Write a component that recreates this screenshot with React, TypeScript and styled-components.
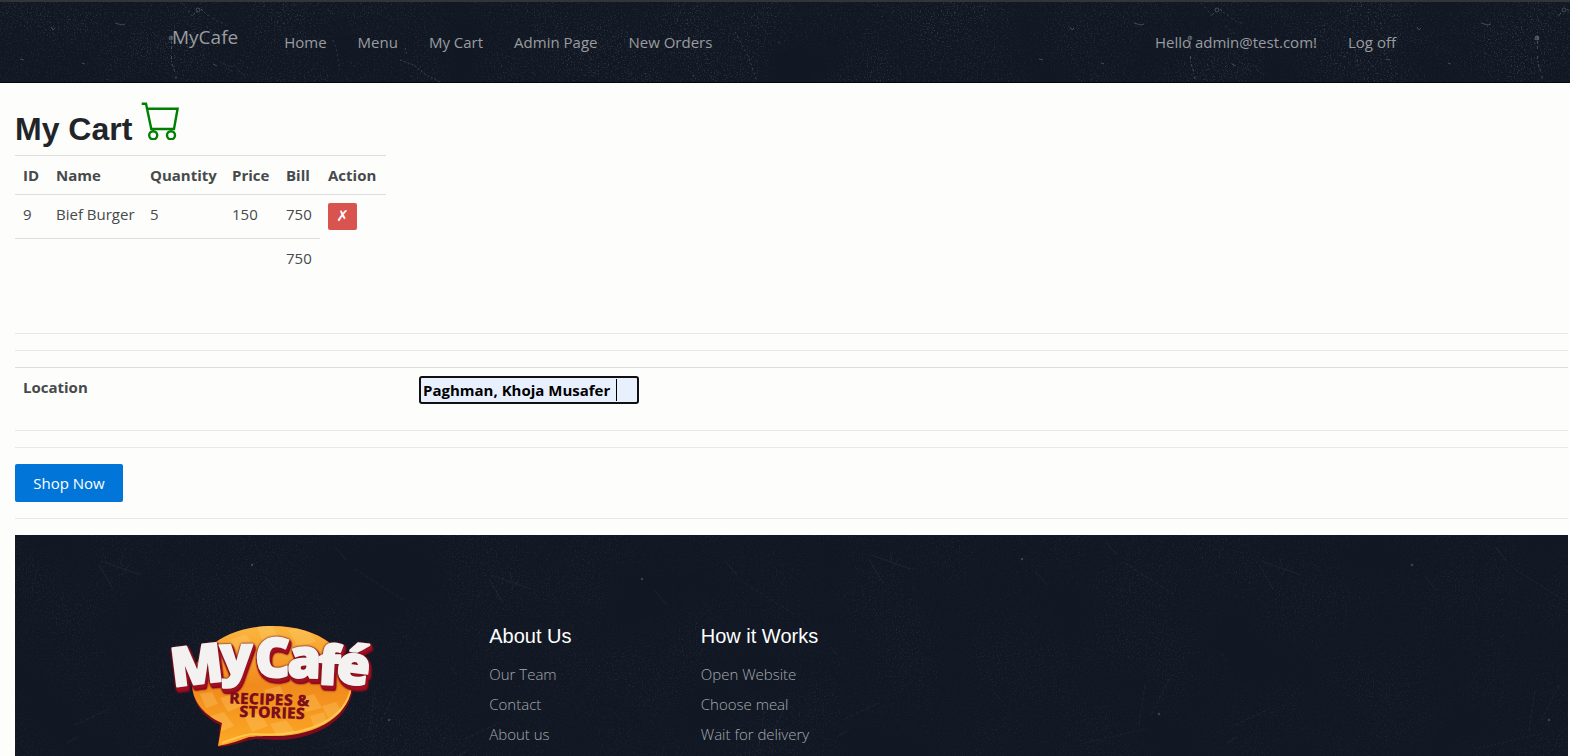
import React from "react";
import styled, { createGlobalStyle } from "styled-components";

const Global = createGlobalStyle`
  *, *::before, *::after { box-sizing: border-box; }
  body {
    margin: 0;
    background: #fdfdfb;
    color: #464a4c;
    font: 400 15px/22px "Open Sans", "Noto Sans", sans-serif;
  }
`;

const Page = styled.div`
  display: flex;
  flex-direction: column;
  min-height: 100vh;
`;

const Header = styled.header`
  position: relative;
  background: #111824;
  border-top: 2px solid #333435;
  border-bottom: 1px solid #06080c;
`;

const TextureLayer = styled.svg`
  position: absolute;
  inset: 0;
  width: 100%;
  height: 100%;
`;

const GrainFill = styled.rect<{ $strength: number }>`
  opacity: ${(p) => p.$strength};
`;

const Nav = styled.nav`
  position: relative;
  display: flex;
  align-items: center;
  width: 80%;
  height: 80px;
  margin: 0 auto;
  padding: 0 17px 0 15px;
`;

const Brand = styled.a`
  margin-right: 46px;
  padding-bottom: 10px;
  color: #9a9c9f;
  font-size: 19px;
  text-decoration: none;
`;

const NavList = styled.ul<{ $end?: boolean }>`
  display: flex;
  gap: 31px;
  margin: 0;
  margin-left: ${(p) => (p.$end ? "auto" : "0")};
  padding: 0;
  list-style: none;
`;

const NavLink = styled.a`
  color: #9a9c9f;
  text-decoration: none;
`;

const Main = styled.main`
  display: flex;
  flex: 1;
  flex-direction: column;
  padding: 17px 2px 0 15px;
`;

const Title = styled.h1`
  margin: 0 0 8px;
  color: #212529;
  font: 700 32px/35px "Liberation Sans", Arial, sans-serif;
`;

const CartIcon = styled.svg`
  width: 39px;
  height: 40px;
  vertical-align: baseline;
`;

const CartTable = styled.table`
  width: 371px;
  margin-bottom: 56px;
  border-collapse: separate;
  border-spacing: 0;
  table-layout: fixed;
  text-align: left;

  th,
  td {
    padding: 8px 0 8px 8px;
    border-top: 1px solid #dddddb;
    vertical-align: top;
    white-space: nowrap;
  }
`;

const Column = styled.col<{ $width: number }>`
  width: ${(p) => p.$width}px;
`;

const RemoveButton = styled.button`
  display: block;
  width: 29px;
  height: 27px;
  padding: 0;
  border: 0;
  border-radius: 2px;
  background: #d9534f;
  color: #fff;
  font: 700 15px/27px "DejaVu Sans", sans-serif;
`;

const Rule = styled.hr`
  width: 100%;
  height: 1px;
  margin: 0 0 16px;
  border: 0;
  background: #e8e8e7;
`;

const Form = styled.form`
  display: flex;
  flex-direction: column;
  align-items: flex-start;
`;

const LocationTable = styled.table`
  width: 100%;
  margin-bottom: 16px;
  border-spacing: 0;
  text-align: left;

  th {
    height: 47px;
    padding: 8px 8px 2px;
    border-top: 1px solid #dddddb;
    vertical-align: top;
  }
`;

const Field = styled.div`
  position: relative;
  width: 220px;
`;

const LocationInput = styled.input`
  display: block;
  width: 100%;
  height: 28px;
  padding: 0 2px;
  border: 2px solid #101014;
  border-radius: 3px;
  outline: 0;
  background: #e8f0fe;
  color: #000;
  font: inherit;
`;

const Caret = styled.span`
  position: absolute;
  top: 3px;
  right: 22px;
  width: 1px;
  height: 22px;
  background: #000;
`;

const ShopButton = styled.button`
  min-width: 108px;
  height: 38px;
  margin-bottom: 16px;
  padding: 0 16px;
  border: 0;
  border-radius: 2px;
  background: #0275d8;
  color: #fff;
  font: inherit;
`;

const Footer = styled.footer`
  position: relative;
  flex: 1;
  padding: 90px 142px 8px;
  background: #111824;
`;

const FooterGrid = styled.div`
  position: relative;
  display: grid;
  grid-template-columns: 3fr 2fr 7fr;
`;

const FooterColumn = styled.section`
  padding: 0 15px;
`;

const Logo = styled.svg`
  display: block;
  width: 200px;
  height: 122px;
  overflow: visible;
`;

const LogoName = styled.text`
  fill: #f4f2f1;
  stroke: #f4f2f1;
  stroke-width: 2px;
  stroke-linejoin: round;
  font: 800 54px "Open Sans", sans-serif;
  filter: drop-shadow(0 0 1px #5d0712) drop-shadow(1px 1px 0 #b01424) drop-shadow(0 2px 0 #a50f20)
    drop-shadow(1px 2px 0 #8c0b1b);
`;

const LogoTag = styled.text`
  fill: #7d0f1c;
  font: 800 16px "Open Sans", sans-serif;
`;

const FooterTitle = styled.h2`
  margin: 0 0 16px;
  color: #fff;
  font: 400 20px/22px "Liberation Sans", Arial, sans-serif;
`;

const FooterList = styled.ul`
  display: flex;
  flex-direction: column;
  gap: 8px;
  margin: 0;
  padding: 0;
  list-style: none;
`;

const FooterLink = styled.a`
  color: #a6a9ae;
  font-weight: 300;
  text-decoration: none;
`;

const columns = [
  { name: "ID", width: 33 },
  { name: "Name", width: 94 },
  { name: "Quantity", width: 82 },
  { name: "Price", width: 54 },
  { name: "Bill", width: 42 },
  { name: "Action", width: 66 },
];

const footerColumns = [
  { title: "About Us", links: ["Our Team", "Contact", "About us"] },
  { title: "How it Works", links: ["Open Website", "Choose meal", "Wait for delivery"] },
];

function Grain({ id, seed, strength }: { id: string; seed: number; strength: number }) {
  return (
    <>
      <filter id={id} x="0" y="0" width="100%" height="100%">
        <feTurbulence type="fractalNoise" baseFrequency="0.7" numOctaves={3} seed={seed} result="fine" />
        <feColorMatrix in="fine" type="matrix" values="0 0 0 0 .4  0 0 0 0 .45  0 0 0 0 .48  3 0 0 0 -1.6" result="dots" />
        <feTurbulence type="fractalNoise" baseFrequency="0.012" numOctaves={2} seed={seed + 3} result="broad" />
        <feColorMatrix in="broad" type="matrix" values="0 0 0 0 1  0 0 0 0 1  0 0 0 0 1  2 0 0 0 -0.4" result="mask" />
        <feComposite in="dots" in2="mask" operator="in" />
      </filter>
      <GrainFill $strength={strength} width="100%" height="100%" filter={`url(#${id})`} />
    </>
  );
}

function HeaderTexture() {
  return (
    <TextureLayer aria-hidden="true">
      <Grain id="header-grain" seed={4} strength={0.25} />
      <defs>
        <g id="scuffs" fill="none" stroke="#7d858c" strokeOpacity=".45">
          <circle cx="198" cy="8" r="2" />
          <path d="M195 11l-2 2M201 7l2 2" />
          <circle cx="171" cy="36" r="2" fill="#7d858c" fillOpacity=".4" />
          <path d="M171.5 34v14M171.5 54v6M172 62l3 8M176 74v5" strokeDasharray="3 2" />
          <path d="M115 21l7 2 3-1M51 25l2 3 2-2M20 57l4 1M213 62l4 2M82 61l3 1" />
          <path d="M182 1l8 9 4 6M204 10l14 10 8 2M206 24l10 8" strokeOpacity=".3" strokeDasharray="2 3" />
          <path d="M220 60l10 5 5-2 4 6 6 4M226 66l8 4M240 58l5 3" strokeOpacity=".35" strokeDasharray="1 2" />
          <path d="M328 8l8 6M333 38l3 8 4 22M350 60l5 5" strokeOpacity=".3" strokeDasharray="2 3" />
        </g>
      </defs>
      <use href="#scuffs" />
      <use href="#scuffs" x="1019" />
      <use href="#scuffs" x="1366" />
      <g fill="none" stroke="#7d858c" strokeOpacity=".4">
        <path d="M735 30l14 26 8 24" strokeDasharray="2 3" />
        <path d="M400 58l14 5 12 10 16 8M405 46l2 7M778 40l3 2M693 73l3 4" strokeDasharray="2 2" />
      </g>
    </TextureLayer>
  );
}

function FooterTexture() {
  return (
    <TextureLayer aria-hidden="true">
      <Grain id="footer-grain" seed={9} strength={0.12} />
      <defs>
        <g id="scratches" fill="none" stroke="#8a929c" strokeOpacity=".1">
          <path d="M86 26l40 14M84 30l14 24M106 40l8-10M320 12l12 14M250 42l12 14" />
          <path d="M340 34l50 32M60 190l34-16M46 118l6 8M360 156l-6 40M384 150l-18 36" strokeDasharray="4 2" />
          <path d="M300 214l60-14M206 160l9 10M126 150l-12 14" strokeDasharray="2 2" />
          <circle cx="237" cy="30" r="1" fill="#8a929c" fillOpacity=".4" />
          <circle cx="374" cy="185" r="1" fill="#8a929c" fillOpacity=".4" />
          <path d="M52 208l10-6M105 24l2 8" />
        </g>
      </defs>
      <use href="#scratches" />
      <use href="#scratches" x="390" y="14" />
      <use href="#scratches" x="770" y="-6" />
      <use href="#scratches" x="1160" />
    </TextureLayer>
  );
}

function CafeLogo() {
  return (
    <Logo viewBox="12 15 200 122" role="img" aria-label="MyCafé Recipes & Stories">
      <defs>
        <linearGradient id="bubble" x1="0" y1="0" x2="0" y2="1">
          <stop offset="0" stopColor="#fbb840" />
          <stop offset=".5" stopColor="#f08a1c" />
          <stop offset="1" stopColor="#fdab25" />
        </linearGradient>
        <clipPath id="bubble-clip">
          <path d="M112 16C160 16 192 42 192 73C192 104 158 126 116 126C104 126 98 126 89 127C80 130 70 134 58 136L62 113C42 104 32 90 32 73C32 42 66 16 112 16Z" />
        </clipPath>
      </defs>
      <path
        fill="#7e0b1d"
        d="M114 16C162 16 194 44 193 77C191 108 158 130 116 130C104 130 98 128 89 130C80 133 70 136 58 137L60 115C42 106 32 92 32 73C32 42 66 16 114 16Z"
      />
      <g clipPath="url(#bubble-clip)">
        <rect x="30" y="14" width="166" height="124" fill="url(#bubble)" />
        <g fill="#ffd57a" fillOpacity=".28">
          <path d="M96 14l14-2 8 14-16 4zM128 20l18-4 10 16-18 4zM70 30l16-6 8 14-16 4zM60 88l14-4 8 12-14 6zM40 84l12-2 6 12-12 4zM84 106l16-3 8 13-16 6zM110 114l16-4 9 12-17 6zM50 106l14-4 10 14-14 6zM138 88l16-4 8 14-16 4zM162 96l14-4 6 10-14 6zM150 106l14-4 4 12-14 3zM104 80l16-4 4 8-16 4z" />
        </g>
        <path fill="none" stroke="#ffd05c" strokeOpacity=".8" strokeWidth="2" d="M62 133C76 128 84 124 94 124C150 128 186 108 191 78" />
      </g>
      <LogoName x="13 60 95 127 157 175" y="77 65 67 67 74 72" rotate="-7 -1 0 2 3 7">
        MyCafé
      </LogoName>
      <LogoTag x="69" y="95" transform="rotate(2 110 93)">RECIPES &amp;</LogoTag>
      <LogoTag x="79" y="108" transform="rotate(2 110 106)">STORIES</LogoTag>
    </Logo>
  );
}

export default function App() {
  return (
    <Page>
      <Global />
      <Header>
        <HeaderTexture />
        <Nav>
          <Brand href="#">MyCafe</Brand>
          <NavList>
            {["Home", "Menu", "My Cart", "Admin Page", "New Orders"].map((label) => (
              <li key={label}>
                <NavLink href="#">{label}</NavLink>
              </li>
            ))}
          </NavList>
          <NavList $end>
            {["Hello admin@test.com!", "Log off"].map((label) => (
              <li key={label}>
                <NavLink href="#">{label}</NavLink>
              </li>
            ))}
          </NavList>
        </Nav>
      </Header>
      <Main>
        <Title>
          My Cart{" "}
          <CartIcon viewBox="1 0 39 40" fill="none" stroke="green" strokeWidth="2.4" aria-hidden="true">
            <path d="M1.7 3.7H6L11.3 29H34L37.6 8.7H7.2" />
            <circle cx="13.2" cy="35.2" r="4" />
            <circle cx="31" cy="35.2" r="4" />
          </CartIcon>
        </Title>
        <CartTable>
          <colgroup>
            {columns.map((c) => (
              <Column key={c.name} $width={c.width} />
            ))}
          </colgroup>
          <thead>
            <tr>
              {columns.map((c) => (
                <th key={c.name} scope="col">
                  {c.name}
                </th>
              ))}
            </tr>
          </thead>
          <tbody>
            <tr>
              <td>9</td>
              <td>Bief Burger</td>
              <td>5</td>
              <td>150</td>
              <td>750</td>
              <td>
                <RemoveButton type="button" aria-label="Remove Bief Burger">✗</RemoveButton>
              </td>
            </tr>
            <tr>
              <td />
              <td />
              <td />
              <td />
              <td>750</td>
            </tr>
          </tbody>
        </CartTable>
        <Rule />
        <Rule />
        <Form>
          <LocationTable>
            <colgroup>
              <Column $width={396} />
              <col />
            </colgroup>
            <tbody>
              <tr>
                <th scope="row">
                  <label htmlFor="location">Location</label>
                </th>
                <th>
                  <Field>
                    <LocationInput id="location" type="text" defaultValue="Paghman, Khoja Musafer " />
                    <Caret />
                  </Field>
                </th>
              </tr>
            </tbody>
          </LocationTable>
          <Rule />
          <Rule />
          <ShopButton type="button">Shop Now</ShopButton>
        </Form>
        <Rule />
        <Footer>
          <FooterTexture />
          <FooterGrid>
            <FooterColumn>
              <CafeLogo />
            </FooterColumn>
            {footerColumns.map((column) => (
              <FooterColumn key={column.title}>
                <FooterTitle>{column.title}</FooterTitle>
                <FooterList>
                  {column.links.map((link) => (
                    <li key={link}>
                      <FooterLink href="#">{link}</FooterLink>
                    </li>
                  ))}
                </FooterList>
              </FooterColumn>
            ))}
          </FooterGrid>
        </Footer>
      </Main>
    </Page>
  );
}
